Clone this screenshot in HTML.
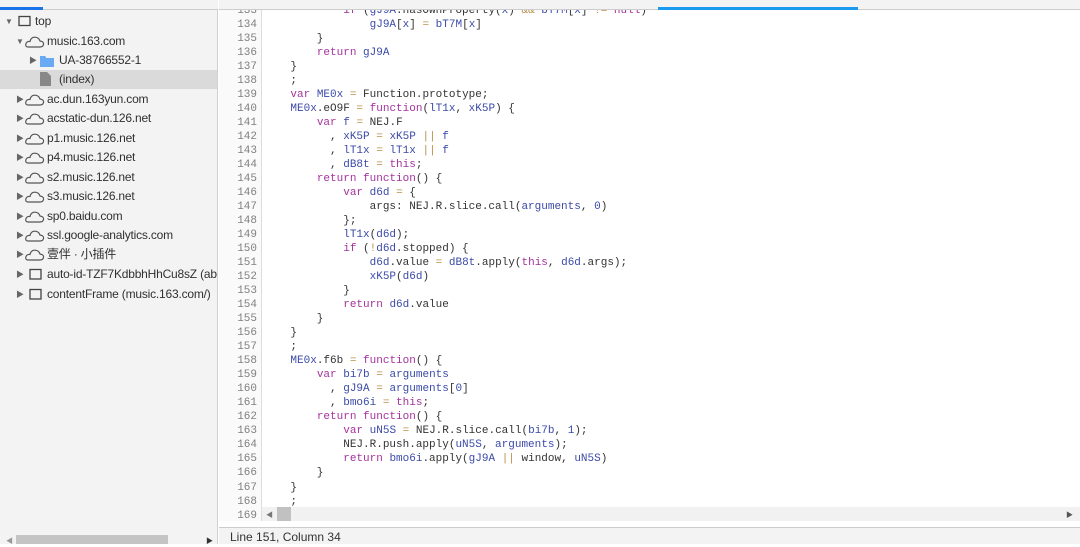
<!DOCTYPE html>
<html><head><meta charset="utf-8"><style>
*{margin:0;padding:0;box-sizing:border-box}
body{width:1080px;height:544px;overflow:hidden;background:#fff;font-family:"Liberation Sans","Noto Sans CJK SC",sans-serif;position:relative}
#left{position:absolute;left:0;top:0;width:218px;height:544px;background:#f3f3f3;border-right:1px solid #d0d0d0}
#lefttabs{position:absolute;left:0;top:0;width:218px;height:10px;border-bottom:1px solid #ccc;background:#f3f3f3}
.row{position:absolute;left:0;width:217px;height:19px;font-size:12px;color:#303030;line-height:19px;white-space:nowrap;overflow:hidden;letter-spacing:-0.2px}
.row.sel{background:#dadada}
.tri{position:absolute;top:0;font-size:8px;color:#666}
.ic{position:absolute;top:4px}
.t{position:absolute}
#code{position:absolute;left:219px;top:0;right:0;height:527px;overflow:hidden}
#gut{position:absolute;left:0;top:0;width:43px;height:521px;background:#fafafa;border-right:1px solid #ddd}
.ln{position:absolute;left:0;width:38px;text-align:right;font-family:"Liberation Mono",monospace;font-size:11px;color:#808080;line-height:14px}
.cl{position:absolute;left:45px;font-family:"Liberation Mono",monospace;font-size:11px;color:#333;line-height:14px;white-space:pre}
.k{color:#a4329e}.v{color:#3b4aa8}.o{color:#b8904a}
#tabs{position:absolute;left:219px;top:0;right:0;height:10px;background:#f3f3f3;border-bottom:1px solid #ccc}
#status{position:absolute;left:219px;top:527px;right:0;height:17px;border-top:1px solid #ccc;background:#f3f3f3;font-size:12px;color:#333;padding-left:11px;line-height:19px}
</style></head><body>
<div id="left">
<div id="lefttabs"><div style="position:absolute;left:0;top:7px;width:43px;height:3px;background:#1a73e8"></div></div>
<div class="row" style="top:12px"><span class="tri" style="left:5px">▼</span><svg class="ic" style="left:18px;top:3px" width="13" height="12"><rect x="1" y="1.5" width="11" height="9" fill="none" stroke="#444" stroke-width="1.3"/></svg><span class="t" style="left:35px">top</span></div>
<div class="row" style="top:32px"><span class="tri" style="left:16px">▼</span><svg class="ic" style="left:25px" width="20" height="12"><path d="M3 11 Q0 11 1 7.5 Q2 5 5 5.5 Q6 1 10 1.2 Q14 1.5 15 5 Q19 5.5 18.5 8.5 Q18 11 15 11Z" fill="none" stroke="#555" stroke-width="1.2"/></svg><span class="t" style="left:47px">music.163.com</span></div>
<div class="row" style="top:51px"><span class="tri" style="left:29px">▶</span><svg class="ic" style="left:40px" width="15" height="12"><path d="M0 1h5l1.5 2H14v9H0z" fill="#6aa9f4"/></svg><span class="t" style="left:59px">UA-38766552-1</span></div>
<div class="row sel" style="top:70px"><svg class="ic" style="left:40px;top:2px" width="11" height="14"><path d="M0 0h7l4 4v10H0z" fill="#888"/></svg><span class="t" style="left:59px">(index)</span></div>
<div class="row" style="top:90px"><span class="tri" style="left:16px">▶</span><svg class="ic" style="left:25px" width="20" height="12"><path d="M3 11 Q0 11 1 7.5 Q2 5 5 5.5 Q6 1 10 1.2 Q14 1.5 15 5 Q19 5.5 18.5 8.5 Q18 11 15 11Z" fill="none" stroke="#555" stroke-width="1.2"/></svg><span class="t" style="left:47px">ac.dun.163yun.com</span></div>
<div class="row" style="top:109px"><span class="tri" style="left:16px">▶</span><svg class="ic" style="left:25px" width="20" height="12"><path d="M3 11 Q0 11 1 7.5 Q2 5 5 5.5 Q6 1 10 1.2 Q14 1.5 15 5 Q19 5.5 18.5 8.5 Q18 11 15 11Z" fill="none" stroke="#555" stroke-width="1.2"/></svg><span class="t" style="left:47px">acstatic-dun.126.net</span></div>
<div class="row" style="top:129px"><span class="tri" style="left:16px">▶</span><svg class="ic" style="left:25px" width="20" height="12"><path d="M3 11 Q0 11 1 7.5 Q2 5 5 5.5 Q6 1 10 1.2 Q14 1.5 15 5 Q19 5.5 18.5 8.5 Q18 11 15 11Z" fill="none" stroke="#555" stroke-width="1.2"/></svg><span class="t" style="left:47px">p1.music.126.net</span></div>
<div class="row" style="top:148px"><span class="tri" style="left:16px">▶</span><svg class="ic" style="left:25px" width="20" height="12"><path d="M3 11 Q0 11 1 7.5 Q2 5 5 5.5 Q6 1 10 1.2 Q14 1.5 15 5 Q19 5.5 18.5 8.5 Q18 11 15 11Z" fill="none" stroke="#555" stroke-width="1.2"/></svg><span class="t" style="left:47px">p4.music.126.net</span></div>
<div class="row" style="top:168px"><span class="tri" style="left:16px">▶</span><svg class="ic" style="left:25px" width="20" height="12"><path d="M3 11 Q0 11 1 7.5 Q2 5 5 5.5 Q6 1 10 1.2 Q14 1.5 15 5 Q19 5.5 18.5 8.5 Q18 11 15 11Z" fill="none" stroke="#555" stroke-width="1.2"/></svg><span class="t" style="left:47px">s2.music.126.net</span></div>
<div class="row" style="top:187px"><span class="tri" style="left:16px">▶</span><svg class="ic" style="left:25px" width="20" height="12"><path d="M3 11 Q0 11 1 7.5 Q2 5 5 5.5 Q6 1 10 1.2 Q14 1.5 15 5 Q19 5.5 18.5 8.5 Q18 11 15 11Z" fill="none" stroke="#555" stroke-width="1.2"/></svg><span class="t" style="left:47px">s3.music.126.net</span></div>
<div class="row" style="top:207px"><span class="tri" style="left:16px">▶</span><svg class="ic" style="left:25px" width="20" height="12"><path d="M3 11 Q0 11 1 7.5 Q2 5 5 5.5 Q6 1 10 1.2 Q14 1.5 15 5 Q19 5.5 18.5 8.5 Q18 11 15 11Z" fill="none" stroke="#555" stroke-width="1.2"/></svg><span class="t" style="left:47px">sp0.baidu.com</span></div>
<div class="row" style="top:226px"><span class="tri" style="left:16px">▶</span><svg class="ic" style="left:25px" width="20" height="12"><path d="M3 11 Q0 11 1 7.5 Q2 5 5 5.5 Q6 1 10 1.2 Q14 1.5 15 5 Q19 5.5 18.5 8.5 Q18 11 15 11Z" fill="none" stroke="#555" stroke-width="1.2"/></svg><span class="t" style="left:47px">ssl.google-analytics.com</span></div>
<div class="row" style="top:245px"><span class="tri" style="left:16px">▶</span><svg class="ic" style="left:25px" width="20" height="12"><path d="M3 11 Q0 11 1 7.5 Q2 5 5 5.5 Q6 1 10 1.2 Q14 1.5 15 5 Q19 5.5 18.5 8.5 Q18 11 15 11Z" fill="none" stroke="#555" stroke-width="1.2"/></svg><span class="t" style="left:47px">壹伴 · 小插件</span></div>
<div class="row" style="top:265px"><span class="tri" style="left:16px">▶</span><svg class="ic" style="left:29px;top:3px" width="14" height="13"><rect x="1" y="1.5" width="11" height="9.5" fill="none" stroke="#444" stroke-width="1.3"/></svg><span class="t" style="left:47px">auto-id-TZF7KdbbhHhCu8sZ (abc</span></div>
<div class="row" style="top:285px"><span class="tri" style="left:16px">▶</span><svg class="ic" style="left:29px;top:3px" width="14" height="13"><rect x="1" y="1.5" width="11" height="9.5" fill="none" stroke="#444" stroke-width="1.3"/></svg><span class="t" style="left:47px">contentFrame (music.163.com/)</span></div>
<div style="position:absolute;left:0;top:534px;width:217px;height:10px;background:#f3f3f3"></div>
<div style="position:absolute;left:6px;top:536px;font-size:7px;color:#999">◀</div>
<div style="position:absolute;left:16px;top:535px;width:152px;height:9px;background:#c4c4c4"></div>
<div style="position:absolute;left:206px;top:536px;font-size:7px;color:#333">▶</div>
</div>
<div id="code">
<div id="gut"></div>
<div id="lines"></div>
</div>
<div id="tabs"><div style="position:absolute;left:439px;top:7px;width:200px;height:3px;background:#1a9bf0"></div></div>
<div style="position:absolute;left:262px;top:507px;width:818px;height:14px;background:#f1f1f1"></div>
<div style="position:absolute;left:266px;top:510px;font-size:7px;color:#777">◀</div>
<div style="position:absolute;left:277px;top:507px;width:14px;height:14px;background:#c1c1c1"></div>
<div style="position:absolute;left:1066px;top:510px;font-size:7px;color:#555">▶</div>
<div id="status">Line 151, Column 34</div>
<script>
var L=[
'            <span class="k">if</span> (<span class="v">gJ9A</span>.hasOwnProperty(<span class="v">x</span>) <span class="o">&amp;&amp;</span> <span class="v">bT7M</span>[<span class="v">x</span>] <span class="o">!=</span> <span class="k">null</span>)',
'                <span class="v">gJ9A</span>[<span class="v">x</span>] <span class="o">=</span> <span class="v">bT7M</span>[<span class="v">x</span>]',
'        }',
'        <span class="k">return</span> <span class="v">gJ9A</span>',
'    }',
'    ;',
'    <span class="k">var</span> <span class="v">ME0x</span> <span class="o">=</span> Function.prototype;',
'    <span class="v">ME0x</span>.eO9F <span class="o">=</span> <span class="k">function</span>(<span class="v">lT1x</span>, <span class="v">xK5P</span>) {',
'        <span class="k">var</span> <span class="v">f</span> <span class="o">=</span> NEJ.F',
'          , <span class="v">xK5P</span> <span class="o">=</span> <span class="v">xK5P</span> <span class="o">||</span> <span class="v">f</span>',
'          , <span class="v">lT1x</span> <span class="o">=</span> <span class="v">lT1x</span> <span class="o">||</span> <span class="v">f</span>',
'          , <span class="v">dB8t</span> <span class="o">=</span> <span class="k">this</span>;',
'        <span class="k">return</span> <span class="k">function</span>() {',
'            <span class="k">var</span> <span class="v">d6d</span> <span class="o">=</span> {',
'                args: NEJ.R.slice.call(<span class="v">arguments</span>, <span class="v">0</span>)',
'            };',
'            <span class="v">lT1x</span>(<span class="v">d6d</span>);',
'            <span class="k">if</span> (<span class="o">!</span><span class="v">d6d</span>.stopped) {',
'                <span class="v">d6d</span>.value <span class="o">=</span> <span class="v">dB8t</span>.apply(<span class="k">this</span>, <span class="v">d6d</span>.args);',
'                <span class="v">xK5P</span>(<span class="v">d6d</span>)',
'            }',
'            <span class="k">return</span> <span class="v">d6d</span>.value',
'        }',
'    }',
'    ;',
'    <span class="v">ME0x</span>.f6b <span class="o">=</span> <span class="k">function</span>() {',
'        <span class="k">var</span> <span class="v">bi7b</span> <span class="o">=</span> <span class="v">arguments</span>',
'          , <span class="v">gJ9A</span> <span class="o">=</span> <span class="v">arguments</span>[<span class="v">0</span>]',
'          , <span class="v">bmo6i</span> <span class="o">=</span> <span class="k">this</span>;',
'        <span class="k">return</span> <span class="k">function</span>() {',
'            <span class="k">var</span> <span class="v">uN5S</span> <span class="o">=</span> NEJ.R.slice.call(<span class="v">bi7b</span>, <span class="v">1</span>);',
'            NEJ.R.push.apply(<span class="v">uN5S</span>, <span class="v">arguments</span>);',
'            <span class="k">return</span> <span class="v">bmo6i</span>.apply(<span class="v">gJ9A</span> <span class="o">||</span> window, <span class="v">uN5S</span>)',
'        }',
'    }',
'    ;',
''];
var h='';
for(var i=0;i<L.length;i++){var t=3.5+i*14.03;h+='<div class="ln" style="top:'+t+'px">'+(133+i)+'</div><div class="cl" style="top:'+t+'px">'+L[i]+'</div>';}
document.getElementById('lines').innerHTML=h;
</script>
</body></html>
